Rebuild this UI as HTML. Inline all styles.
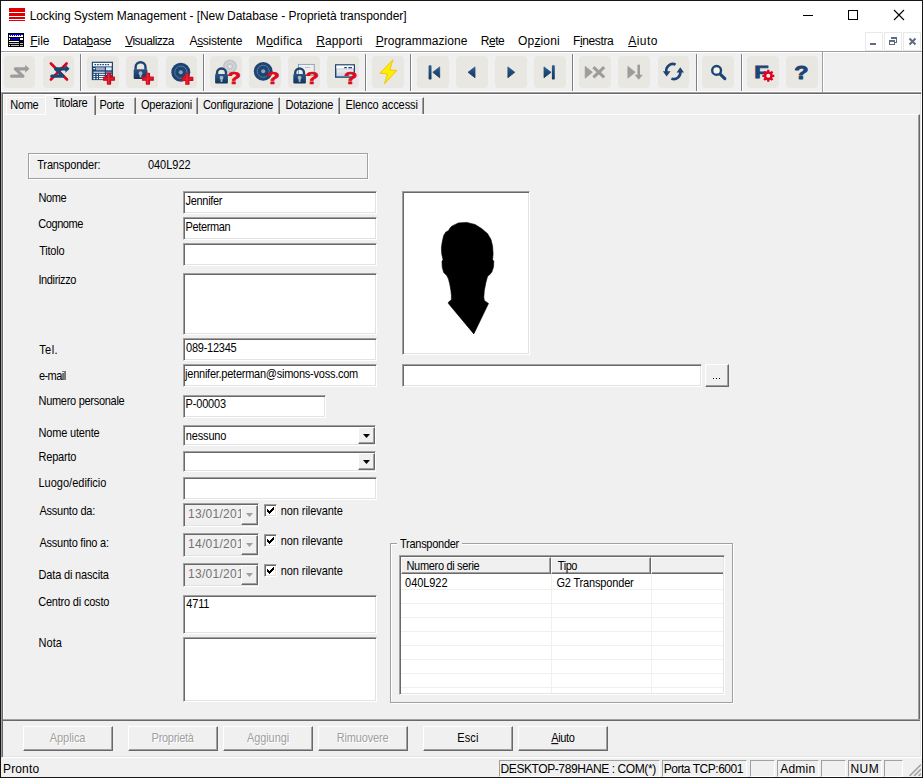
<!DOCTYPE html>
<html><head><meta charset="utf-8"><title>Locking System Management</title>
<style>
*{box-sizing:border-box;margin:0;padding:0}
html,body{width:923px;height:778px;overflow:hidden;background:#f0f0f0}
body{position:relative;font-family:"Liberation Sans",sans-serif;font-size:11px;color:#000}
div,span,svg{position:absolute}
.tx{white-space:nowrap;display:block}
.tx u{text-decoration:underline;text-underline-offset:1px;text-decoration-thickness:1px}
.sunk{border:1px solid;border-color:#a0a0a0 #fff #fff #a0a0a0;box-shadow:inset 1px 1px 0 #696969,inset -1px -1px 0 #e3e3e3;background:#fff}
.raised{border:1px solid;border-color:#fff #696969 #696969 #fff;box-shadow:inset -1px -1px 0 #a0a0a0;background:#f0f0f0}
.tbtn{top:56px;width:31px;height:32px;background:#e9e7e1;border-radius:4px}
.tsep{top:54px;width:1px;height:37px;background:#808080;box-shadow:1px 0 0 #fff}
.pane{border:1px solid;border-color:#a0a0a0 #fff #fff #a0a0a0;top:760px;height:17px;background:#f0f0f0}
.utab{top:97px;height:17px;border-top:1px solid #fff;border-right:1px solid #696969;box-shadow:inset -1px 0 0 #a0a0a0}
</style></head><body>
<!-- window frame -->
<div style="left:0;top:0;width:923px;height:778px;border:1px solid #161616"></div>
<!-- title bar -->
<div id="title" style="left:1px;top:1px;width:921px;height:29px;background:#fff"></div>
<!-- menu bar -->
<div id="menu" style="left:1px;top:30px;width:921px;height:21px;background:#fff"></div>
<!-- toolbar -->
<div id="tb" style="left:1px;top:51px;width:921px;height:41px;background:#f0f0f0;border-top:1px solid #a0a0a0;box-shadow:inset 1px 1px 0 #fff,inset 0 -1px 0 #fff"></div>
<!-- title icon -->
<div style="left:9px;top:8px;width:16px;height:4px;background:#de0000"></div>
<div style="left:9px;top:13px;width:16px;height:3px;background:#de0000"></div>
<div style="left:9px;top:17px;width:16px;height:2px;background:#de0000"></div>
<div style="left:9px;top:20px;width:16px;height:1.3px;background:#de0000"></div>
<!-- window controls -->
<div style="left:803px;top:15px;width:10px;height:1px;background:#000"></div>
<div style="left:848px;top:10px;width:10px;height:10px;border:1px solid #000"></div>
<svg style="left:893px;top:9px" width="12" height="12" viewBox="0 0 12 12"><path d="M1 1L11 11M11 1L1 11" stroke="#000" stroke-width="1.1"/></svg>
<!-- menu doc icon -->
<svg style="left:8px;top:33px" width="16" height="14" viewBox="0 0 16 14" shape-rendering="crispEdges">
<rect x="0" y="0" width="16" height="14" fill="#000"/>
<rect x="1" y="1" width="14" height="2" fill="#0000d0"/>
<path d="M1 2h1v1h-1zM3 2h1v1h-1zM5 2h1v1h-1zM7 2h1v1h-1zM9 2h1v1h-1zM11 2h1v1h-1zM13 2h2v1h-2z" fill="#fff"/>
<rect x="1" y="3" width="14" height="1" fill="#fff"/>
<rect x="1" y="5" width="1" height="2" fill="#fff"/><rect x="3" y="5" width="8" height="2" fill="#0000c0"/><rect x="12" y="5" width="3" height="2" fill="#fff"/>
<rect x="1" y="8" width="10" height="1" fill="#fff"/><rect x="12" y="8" width="3" height="1" fill="#000080"/>
<rect x="1" y="10" width="10" height="1" fill="#c0c0c0"/><rect x="12" y="10" width="3" height="1" fill="#c0c0c0"/>
<rect x="1" y="12" width="1" height="1" fill="#fff"/><rect x="3" y="12" width="8" height="1" fill="#c0c0c0"/><rect x="12" y="12" width="3" height="1" fill="#c0c0c0"/>
</svg>
<!-- mdi child buttons -->
<div style="left:865px;top:32px;width:18px;height:19px;border:1px solid #e9e9e9;background:#fff"></div>
<div style="left:884px;top:32px;width:18px;height:19px;border:1px solid #e9e9e9;background:#fff"></div>
<div style="left:903px;top:32px;width:18px;height:19px;border:1px solid #e9e9e9;background:#fff"></div>
<div style="left:870px;top:43px;width:6px;height:2px;background:#5d6c7e"></div>
<svg style="left:888px;top:36px" width="10" height="10" viewBox="0 0 10 10" shape-rendering="crispEdges"><path d="M3.5 3V1.5h5V6H6.5" fill="none" stroke="#5d6c7e" stroke-width="1"/><rect x="3" y="1" width="6" height="1.6" fill="#5d6c7e"/><rect x="1.5" y="4.5" width="5" height="4" fill="none" stroke="#5d6c7e" stroke-width="1"/><rect x="1" y="4" width="6" height="1.6" fill="#5d6c7e"/></svg>
<svg style="left:908px;top:37px" width="9" height="9" viewBox="0 0 9 9"><path d="M1.5 1.5L7.5 7.5M7.5 1.5L1.5 7.5" stroke="#5d6c7e" stroke-width="2"/></svg>
<svg width="0" height="0" style="left:0;top:0"><defs><linearGradient id="lg" x1="0" y1="0" x2="0" y2="1"><stop offset="0" stop-color="#2a5585"/><stop offset="1" stop-color="#123456"/></linearGradient><linearGradient id="ng" x1="0" y1="0" x2="0" y2="1"><stop offset="0" stop-color="#2c5f93"/><stop offset="1" stop-color="#13365c"/></linearGradient><linearGradient id="wg" x1="0" y1="0" x2="0" y2="1"><stop offset="0" stop-color="#ffffff"/><stop offset="1" stop-color="#c3d0e2"/></linearGradient></defs></svg>
<div class="tbtn" style="left:4.4px;width:30.5px"></div>
<svg style="left:4.4px;top:56px;overflow:visible" width="32" height="32" viewBox="0 0 32 32"><path d="M7.6 20.2H18.9L11.3 12.8H22" fill="none" stroke="#9c9c9c" stroke-width="3.2" stroke-linecap="round" stroke-linejoin="round"/><path d="M21.2 8.8L25.4 12.8L21.2 16.8z" fill="#9c9c9c"/></svg>
<div class="tbtn" style="left:42.7px;width:31.1px"></div>
<svg style="left:42.7px;top:56px;overflow:visible" width="32" height="32" viewBox="0 0 32 32"><path d="M7.9 7.5L24 23.5M7.9 23.5L23.6 7.5" stroke="#e2001a" stroke-width="2.6" stroke-linecap="round"/><path d="M8.799999999999999 20.2H20.099999999999998L12.5 12.8H23.2" fill="none" stroke="#1d4573" stroke-width="3.2" stroke-linecap="round" stroke-linejoin="round"/><path d="M22.4 8.8L26.599999999999998 12.8L22.4 16.8z" fill="#1d4573"/></svg>
<div class="tbtn" style="left:87.1px;width:31.5px"></div>
<svg style="left:87.1px;top:56px;overflow:visible" width="32" height="32" viewBox="0 0 32 32"><rect x="4.9" y="5.8" width="21" height="18.2" fill="#fff"/><rect x="5.4" y="6.3" width="20" height="17.2" fill="none" stroke="#1d4573" stroke-width="1.2"/><path d="M7.5 8.6h15.5" stroke="#1d4573" stroke-width="1.1" stroke-dasharray="1.6 1"/><rect x="5.4" y="10.4" width="20" height="13" fill="#1d4573"/><rect x="9" y="11.3" width="8.8" height="3" fill="#a3abc4"/><rect x="19" y="11.3" width="5.6" height="3" fill="#e8ecf2"/><rect x="6.4" y="12" width="1.8" height="1.2" fill="#fff"/><rect x="6.4" y="15.7" width="11.4" height="1" fill="#fff"/><rect x="19" y="15.7" width="5.6" height="1" fill="#8fa0bd"/><rect x="6.4" y="17.8" width="1.8" height="1.1" fill="#fff"/><rect x="9.6" y="17.8" width="1.4" height="1.1" fill="#fff"/><rect x="12" y="17.8" width="5.8" height="1.1" fill="#fff"/><rect x="19" y="17.8" width="5.6" height="1.1" fill="#fff"/><rect x="6.4" y="19.9" width="1.8" height="1.1" fill="#fff"/><rect x="9.6" y="19.9" width="1.4" height="1.1" fill="#fff"/><rect x="12" y="19.9" width="5.8" height="1.1" fill="#fff"/><rect x="6.4" y="21.8" width="1.8" height="1.4" fill="#fff"/><rect x="9.6" y="21.8" width="1.4" height="1.4" fill="#fff"/><rect x="12" y="21.8" width="5.8" height="1.4" fill="#fff"/><path d="M20.5 17.4h3.0v3.8h3.8v3.0h-3.8v3.8h-3.0v-3.8h-3.8v-3.0h3.8z" fill="#e01828" stroke="#cc0c1e" stroke-width="1.3" stroke-linejoin="round"/><path d="M21.4 17.7v10.0" stroke="#ee4450" stroke-width="0.9" opacity="0.6"/></svg>
<div class="tbtn" style="left:126.4px;width:31.5px"></div>
<svg style="left:126.4px;top:56px;overflow:visible" width="32" height="32" viewBox="0 0 32 32"><path d="M9.6 13.7V11.149999999999999a4.949999999999999 4.949999999999999 0 0 1 9.899999999999999 0V13.7" fill="none" stroke="#1d4573" stroke-width="2.4"/><rect x="7.7" y="13.2" width="13.7" height="9.900000000000002" rx="1" fill="url(#lg)"/><circle cx="14.549999999999999" cy="17.15" r="1.9" fill="#a9b6cb"/><rect x="13.649999999999999" y="17.15" width="1.8" height="4.2" fill="#a9b6cb"/><path d="M20.4 17.4h3.0v3.8h3.8v3.0h-3.8v3.8h-3.0v-3.8h-3.8v-3.0h3.8z" fill="#e01828" stroke="#cc0c1e" stroke-width="1.3" stroke-linejoin="round"/><path d="M21.299999999999997 17.7v10.0" stroke="#ee4450" stroke-width="0.9" opacity="0.6"/></svg>
<div class="tbtn" style="left:165.7px;width:31.5px"></div>
<svg style="left:165.7px;top:56px;overflow:visible" width="32" height="32" viewBox="0 0 32 32"><circle cx="14.8" cy="16.2" r="9.5" fill="#1d4573"/><circle cx="14.8" cy="16.2" r="6.08" fill="none" stroke="#5f7fa8" stroke-width="0.9"/><circle cx="14.8" cy="16.2" r="2" fill="#93a4c0"/><path d="M19.9 17.599999999999998h3.0v3.8h3.8v3.0h-3.8v3.8h-3.0v-3.8h-3.8v-3.0h3.8z" fill="#e01828" stroke="#cc0c1e" stroke-width="1.3" stroke-linejoin="round"/><path d="M20.799999999999997 17.9v10.0" stroke="#ee4450" stroke-width="0.9" opacity="0.6"/></svg>
<div class="tbtn" style="left:210px;width:31.5px"></div>
<svg style="left:210px;top:56px;overflow:visible" width="32" height="32" viewBox="0 0 32 32"><circle cx="20" cy="10.4" r="7" fill="#c4c8cc"/><circle cx="20" cy="10.4" r="4.34" fill="none" stroke="#dcdfe2" stroke-width="1"/><circle cx="20" cy="10.4" r="1.6" fill="#e4e6e8"/><path d="M7.0 18.5V17.0a4.5 4.5 0 0 1 9.0 0V18.5" fill="none" stroke="#1d4573" stroke-width="2.4"/><rect x="5.1" y="18" width="12.799999999999999" height="9.5" rx="1" fill="url(#lg)"/><circle cx="11.5" cy="21.75" r="1.9" fill="#a9b6cb"/><rect x="10.6" y="21.75" width="1.8" height="4.2" fill="#a9b6cb"/><text x="0" y="0" transform="translate(17.62 27.8) scale(1.28 1)" font-family="Liberation Sans, sans-serif" font-weight="bold" font-size="17.2" fill="#dd0a1a" stroke="#dd0a1a" stroke-width="0.7" stroke-linejoin="round">?</text></svg>
<div class="tbtn" style="left:249.2px;width:31.5px"></div>
<svg style="left:249.2px;top:56px;overflow:visible" width="32" height="32" viewBox="0 0 32 32"><circle cx="14.2" cy="15.3" r="9.4" fill="#1d4573"/><circle cx="14.2" cy="15.3" r="6.016" fill="none" stroke="#5f7fa8" stroke-width="0.9"/><circle cx="14.2" cy="15.3" r="2" fill="#93a4c0"/><text x="0" y="0" transform="translate(17.32 27.8) scale(1.28 1)" font-family="Liberation Sans, sans-serif" font-weight="bold" font-size="17.2" fill="#dd0a1a" stroke="#dd0a1a" stroke-width="0.7" stroke-linejoin="round">?</text></svg>
<div class="tbtn" style="left:288px;width:31.6px"></div>
<svg style="left:288px;top:56px;overflow:visible" width="32" height="32" viewBox="0 0 32 32"><rect x="10.6" y="8.3" width="15.6" height="11" fill="#eeeeea" stroke="#6a86b4" stroke-width="0.7"/><path d="M17 11.5h5" stroke="#9aa" stroke-width="0.6"/><path d="M7.200000000000001 18.5V16.9a4.399999999999999 4.399999999999999 0 0 1 8.799999999999997 0V18.5" fill="none" stroke="#1d4573" stroke-width="2.4"/><rect x="5.3" y="18" width="12.599999999999998" height="9.5" rx="1" fill="url(#lg)"/><circle cx="11.6" cy="21.75" r="1.9" fill="#a9b6cb"/><rect x="10.7" y="21.75" width="1.8" height="4.2" fill="#a9b6cb"/><text x="0" y="0" transform="translate(17.62 27.8) scale(1.28 1)" font-family="Liberation Sans, sans-serif" font-weight="bold" font-size="17.2" fill="#dd0a1a" stroke="#dd0a1a" stroke-width="0.7" stroke-linejoin="round">?</text></svg>
<div class="tbtn" style="left:327.2px;width:31.6px"></div>
<svg style="left:327.2px;top:56px;overflow:visible" width="32" height="32" viewBox="0 0 32 32"><rect x="8.7" y="8.9" width="18.6" height="12.2" fill="url(#wg)" stroke="#1d4573" stroke-width="1.4"/><rect x="9.4" y="9.6" width="17.2" height="2.6" fill="#fff"/><path d="M9.4 13h17.2" stroke="#b9c6d8" stroke-width="0.8"/><path d="M17.2 11.6h2.6M21.4 11.6h3.6" stroke="#1d4573" stroke-width="1.3"/><text x="0" y="0" transform="translate(17.12 27.8) scale(1.28 1)" font-family="Liberation Sans, sans-serif" font-weight="bold" font-size="17.2" fill="#dd0a1a" stroke="#dd0a1a" stroke-width="0.7" stroke-linejoin="round">?</text></svg>
<div class="tbtn" style="left:372px;width:31.6px"></div>
<svg style="left:372px;top:56px;overflow:visible" width="32" height="32" viewBox="0 0 32 32"><path d="M20.9 3.8L8 17.1L15.5 18L12.4 27.8L24.9 14.4L17.7 14z" fill="#ffee00" stroke="#f0c000" stroke-width="0.9" stroke-linejoin="round"/></svg>
<div class="tbtn" style="left:417.3px;width:31.4px"></div>
<svg style="left:417.3px;top:56px;overflow:visible" width="32" height="32" viewBox="0 0 32 32"><rect x="11.6" y="9.2" width="2.9" height="14.3" rx="0.8" fill="url(#ng)"/><path d="M22.7 10.9V21.7L15.8 16.3z" fill="url(#ng)" stroke="url(#ng)" stroke-width="0.8" stroke-linejoin="round"/></svg>
<div class="tbtn" style="left:456px;width:31.6px"></div>
<svg style="left:456px;top:56px;overflow:visible" width="32" height="32" viewBox="0 0 32 32"><path d="M19 10.9V21.7L12 16.3z" fill="url(#ng)" stroke="url(#ng)" stroke-width="0.8" stroke-linejoin="round"/></svg>
<div class="tbtn" style="left:495.1px;width:31.5px"></div>
<svg style="left:495.1px;top:56px;overflow:visible" width="32" height="32" viewBox="0 0 32 32"><path d="M12.9 10.9V21.7L19.8 16.3z" fill="url(#ng)" stroke="url(#ng)" stroke-width="0.8" stroke-linejoin="round"/></svg>
<div class="tbtn" style="left:534.3px;width:31.3px"></div>
<svg style="left:534.3px;top:56px;overflow:visible" width="32" height="32" viewBox="0 0 32 32"><path d="M10 10.9V21.7L17.1 16.3z" fill="url(#ng)" stroke="url(#ng)" stroke-width="0.8" stroke-linejoin="round"/><rect x="17.9" y="9.2" width="2.9" height="14.3" rx="0.8" fill="url(#ng)"/></svg>
<div class="tbtn" style="left:579.4px;width:31.3px"></div>
<svg style="left:579.4px;top:56px;overflow:visible" width="32" height="32" viewBox="0 0 32 32"><path d="M6.2 10.4V22.1L13.4 16.25z" fill="#9c9c9c" stroke="#9c9c9c" stroke-width="0.8" stroke-linejoin="round"/><path d="M14.4 11.2L25.2 21.4M25.2 11.2L14.4 21.4" stroke="#9c9c9c" stroke-width="3.1"/></svg>
<div class="tbtn" style="left:618.2px;width:31.4px"></div>
<svg style="left:618.2px;top:56px;overflow:visible" width="32" height="32" viewBox="0 0 32 32"><path d="M9.9 10.4V22.1L17.2 16.25z" fill="#9c9c9c" stroke="#9c9c9c" stroke-width="0.8" stroke-linejoin="round"/><path d="M20.7 8.7V21" stroke="#9c9c9c" stroke-width="2.6"/><path d="M16.6 18.8H24.8L20.7 23.8z" fill="#9c9c9c"/></svg>
<div class="tbtn" style="left:657.5px;width:31.3px"></div>
<svg style="left:657.5px;top:56px;overflow:visible" width="32" height="32" viewBox="0 0 32 32"><path d="M17.6 8.6A6.6 6.6 0 0 0 8.6 16.6" fill="none" stroke="#1d4573" stroke-width="2.6"/><path d="M4.9 15.2H12.6L8.6 20.4z" fill="#1d4573"/><path d="M13.4 22.6A6.6 6.6 0 0 0 22.2 15" fill="none" stroke="#1d4573" stroke-width="2.6"/><path d="M18.6 16.4H26L22.3 11.2z" fill="#1d4573"/></svg>
<div class="tbtn" style="left:701.9px;width:31.8px"></div>
<svg style="left:701.9px;top:56px;overflow:visible" width="32" height="32" viewBox="0 0 32 32"><circle cx="14.6" cy="14.4" r="4.4" fill="#f4f4f0" stroke="#1d4573" stroke-width="2.4"/><path d="M18.2 18.2L22.8 22.6" stroke="#1d4573" stroke-width="3.2" stroke-linecap="round"/></svg>
<div class="tbtn" style="left:747.4px;width:31.3px"></div>
<svg style="left:747.4px;top:56px;overflow:visible" width="32" height="32" viewBox="0 0 32 32"><text transform="translate(7.2 21.5) scale(1.38 1)" font-family="Liberation Sans, sans-serif" font-weight="bold" font-size="17" fill="#1d4573" stroke="#1d4573" stroke-width="0.8">F</text><path d="M27.29 18.65L27.29 20.95L25.65 20.96L25.19 22.06L26.35 23.22L24.72 24.85L23.56 23.69L22.46 24.15L22.45 25.79L20.15 25.79L20.14 24.15L19.04 23.69L17.88 24.85L16.25 23.22L17.41 22.06L16.95 20.96L15.31 20.95L15.31 18.65L16.95 18.64L17.41 17.54L16.25 16.38L17.88 14.75L19.04 15.91L20.14 15.45L20.15 13.81L22.45 13.81L22.46 15.45L23.56 15.91L24.72 14.75L26.35 16.38L25.19 17.54L25.65 18.64z" fill="#e0001f"/><circle cx="21.3" cy="19.8" r="2" fill="#f4efe9"/></svg>
<div class="tbtn" style="left:786.4px;width:31.6px"></div>
<svg style="left:786.4px;top:56px;overflow:visible" width="32" height="32" viewBox="0 0 32 32"><text x="0" y="0" transform="translate(8.37 23.2) scale(1.24 1)" font-family="Liberation Sans, sans-serif" font-weight="bold" font-size="18.8" fill="#1d4573" stroke="#1d4573" stroke-width="0.9" stroke-linejoin="round">?</text></svg>
<div class="tsep" style="left:80px"></div>
<div class="tsep" style="left:203px"></div>
<div class="tsep" style="left:365px"></div>
<div class="tsep" style="left:410px"></div>
<div class="tsep" style="left:572px"></div>
<div class="tsep" style="left:696px"></div>
<div class="tsep" style="left:741px"></div>
<div class="tsep" style="left:822px;top:52px;height:40px;background:#a0a0a0"></div>
<!-- mdi client edge -->
<div style="left:1px;top:92px;width:921px;height:666px;border:1px solid;border-color:#a0a0a0 #fff #fff #a0a0a0;box-shadow:inset 1px 1px 0 #696969,inset -1px -1px 0 #e3e3e3;background:#f0f0f0"></div>
<!-- dialog highlight -->
<div style="left:3px;top:94px;width:917px;height:625px;border-left:1px solid #fff;border-top:1px solid #fff"></div>
<!-- tab pane -->
<div style="left:3px;top:114px;width:917px;height:607px;border:1px solid;border-color:#fff #696969 #696969 #fff;box-shadow:inset -1px -1px 0 #a0a0a0"></div>
<div style="left:3px;top:719px;width:917px;height:2px;background:#696969;border-top:1px solid #a0a0a0"></div>
<!-- unselected tabs: Nome -->
<div style="left:6px;top:97px;width:40px;height:17px;border-top:1px solid #fff;border-left:1px solid #fff"></div>
<!-- selected tab Titolare -->
<div style="left:45px;top:95px;width:51px;height:20px;background:#f0f0f0;border:1px solid;border-color:#fff #696969 #f0f0f0 #fff;border-bottom:0;box-shadow:inset -1px 0 0 #a0a0a0"></div><div style="left:46px;top:114px;width:48px;height:2px;background:#f0f0f0"></div>
<!-- other tabs -->
<div class="utab" style="left:96px;width:40px"></div>
<div class="utab" style="left:136px;width:62px"></div>
<div class="utab" style="left:198px;width:82px"></div>
<div class="utab" style="left:280px;width:60px"></div>
<div class="utab" style="left:340px;width:84px"></div>

<div style="left:28px;top:153px;width:340px;height:26px;border:1px solid #a0a0a0;box-shadow:1px 1px 0 #fff,inset 1px 1px 0 #fff"></div>
<div class="sunk" style="left:183px;top:191px;width:194px;height:23px"></div>
<div class="sunk" style="left:183px;top:217px;width:194px;height:23px"></div>
<div class="sunk" style="left:183px;top:243px;width:194px;height:23px"></div>
<div class="sunk" style="left:183px;top:273px;width:194px;height:62px"></div>
<div class="sunk" style="left:183px;top:338px;width:194px;height:23px"></div>
<div class="sunk" style="left:183px;top:364px;width:194px;height:23px"></div>
<div class="sunk" style="left:183px;top:395px;width:143px;height:23px"></div>
<div class="sunk" style="left:183px;top:425px;width:193px;height:21px"></div>
<div class="raised" style="left:358px;top:427px;width:17px;height:17px"></div>
<svg style="left:363px;top:434px" width="7" height="4" viewBox="0 0 7 4"><path d="M0 0h7L3.5 4z" fill="#000"/></svg>
<div class="sunk" style="left:183px;top:451px;width:193px;height:21px"></div>
<div class="raised" style="left:358px;top:453px;width:17px;height:17px"></div>
<svg style="left:363px;top:460px" width="7" height="4" viewBox="0 0 7 4"><path d="M0 0h7L3.5 4z" fill="#000"/></svg>
<div class="sunk" style="left:183px;top:477px;width:194px;height:23px"></div>
<div class="sunk" style="left:183px;top:503px;width:76px;height:24px;background:#f0f0f0"></div>
<div class="raised" style="left:241px;top:505px;width:17px;height:20px"></div>
<svg style="left:246px;top:513px" width="7" height="4" viewBox="0 0 7 4"><path d="M0 0h7L3.5 4z" fill="#a0a0a0"/></svg>
<div style="left:185px;top:506px;width:56px;height:18px;overflow:hidden"><span class="tx" style="left:3px;top:0px;font-size:12px;line-height:16px;color:#737373;letter-spacing:0.28px">13/01/2016</span></div>
<div class="sunk" style="left:264px;top:504px;width:13px;height:13px"></div>
<svg style="left:267px;top:507px" width="7" height="7" viewBox="0 0 7 7"><path d="M0 2v3l2 2 5-5v-3l-5 5z" fill="#000" shape-rendering="crispEdges"/></svg>
<div class="sunk" style="left:183px;top:533px;width:76px;height:24px;background:#f0f0f0"></div>
<div class="raised" style="left:241px;top:535px;width:17px;height:20px"></div>
<svg style="left:246px;top:543px" width="7" height="4" viewBox="0 0 7 4"><path d="M0 0h7L3.5 4z" fill="#a0a0a0"/></svg>
<div style="left:185px;top:536px;width:56px;height:18px;overflow:hidden"><span class="tx" style="left:3px;top:0px;font-size:12px;line-height:16px;color:#737373;letter-spacing:0.28px">14/01/2016</span></div>
<div class="sunk" style="left:264px;top:534px;width:13px;height:13px"></div>
<svg style="left:267px;top:537px" width="7" height="7" viewBox="0 0 7 7"><path d="M0 2v3l2 2 5-5v-3l-5 5z" fill="#000" shape-rendering="crispEdges"/></svg>
<div class="sunk" style="left:183px;top:563px;width:76px;height:24px;background:#f0f0f0"></div>
<div class="raised" style="left:241px;top:565px;width:17px;height:20px"></div>
<svg style="left:246px;top:573px" width="7" height="4" viewBox="0 0 7 4"><path d="M0 0h7L3.5 4z" fill="#a0a0a0"/></svg>
<div style="left:185px;top:566px;width:56px;height:18px;overflow:hidden"><span class="tx" style="left:3px;top:0px;font-size:12px;line-height:16px;color:#737373;letter-spacing:0.28px">13/01/2016</span></div>
<div class="sunk" style="left:264px;top:564px;width:13px;height:13px"></div>
<svg style="left:267px;top:567px" width="7" height="7" viewBox="0 0 7 7"><path d="M0 2v3l2 2 5-5v-3l-5 5z" fill="#000" shape-rendering="crispEdges"/></svg>
<div class="sunk" style="left:183px;top:595px;width:194px;height:39px"></div>
<div class="sunk" style="left:183px;top:637px;width:194px;height:65px"></div>
<div class="sunk" style="left:402px;top:191px;width:128px;height:164px"></div>
<svg style="left:402px;top:191px" width="127" height="163" viewBox="0 0 127 163"><path d="M49.7 35.2 L56.4 31.9 L64.8 31.4 L73.1 33.5 L79.8 37.7 L85.6 42.7 L89.0 48.6 L90.6 55.2 L91.1 62.8 L90.6 68.6 L91.8 70.3 L91.5 76.1 L89.8 81.1 L87.3 84.1 L85.6 85.3 L84.0 91.1 L82.3 99.5 L81.8 106.2 L82.3 109.5 L86.5 112.5 L71.8 142.9 L46.4 112.5 L46.4 111.2 L49.4 108.7 L49.4 104.5 L48.9 99.5 L47.7 92.8 L46.4 87.8 L44.7 84.5 L41.7 81.5 L40.2 76.1 L40.0 70.3 L41.0 68.6 L39.7 62.8 L39.4 56.9 L40.2 51.1 L41.7 44.4 L43.9 41.0 L46.4 39.7 L48.1 36.9Z" fill="#000" stroke="#000" stroke-width="0.6" stroke-linejoin="round"/></svg>
<div class="sunk" style="left:402px;top:364px;width:300px;height:23px"></div>
<div class="raised" style="left:705px;top:364px;width:24px;height:23px"></div>
<div style="left:713px;top:378px;width:1px;height:1px;background:#000;box-shadow:3px 0 0 #000,6px 0 0 #000"></div>
<div style="left:390px;top:543px;width:343px;height:160px;border:1px solid #a0a0a0;box-shadow:1px 1px 0 #fff,inset 1px 1px 0 #fff"></div>
<div style="left:397px;top:538px;width:65px;height:13px;background:#f0f0f0"></div>
<div class="sunk" style="left:399px;top:555px;width:326px;height:140px"></div>
<div class="raised" style="left:401px;top:557px;width:150px;height:17px"></div>
<div class="raised" style="left:551px;top:557px;width:100px;height:17px"></div>
<div class="raised" style="left:651px;top:557px;width:72px;height:17px;border-right:0;box-shadow:inset 0 -1px 0 #a0a0a0"></div>
<div style="left:401px;top:589px;width:322px;height:1px;background:#f0f0f0"></div>
<div style="left:401px;top:603px;width:322px;height:1px;background:#f0f0f0"></div>
<div style="left:401px;top:617px;width:322px;height:1px;background:#f0f0f0"></div>
<div style="left:401px;top:631px;width:322px;height:1px;background:#f0f0f0"></div>
<div style="left:401px;top:645px;width:322px;height:1px;background:#f0f0f0"></div>
<div style="left:401px;top:659px;width:322px;height:1px;background:#f0f0f0"></div>
<div style="left:401px;top:673px;width:322px;height:1px;background:#f0f0f0"></div>
<div style="left:401px;top:687px;width:322px;height:1px;background:#f0f0f0"></div>
<div style="left:551px;top:574px;width:1px;height:119px;background:#f0f0f0"></div>
<div style="left:651px;top:574px;width:1px;height:119px;background:#f0f0f0"></div>
<div class="raised" style="left:23px;top:726px;width:90px;height:25px"></div>
<div class="raised" style="left:128px;top:726px;width:90px;height:25px"></div>
<div class="raised" style="left:223px;top:726px;width:90px;height:25px"></div>
<div class="raised" style="left:318px;top:726px;width:90px;height:25px"></div>
<div class="raised" style="left:423px;top:726px;width:90px;height:25px"></div>
<div class="raised" style="left:518px;top:726px;width:90px;height:25px"></div>
<div style="left:1px;top:758px;width:921px;height:19px;background:#f0f0f0"></div>
<div class="pane" style="left:499px;width:161px"></div>
<div class="pane" style="left:662px;width:85px"></div>
<div class="pane" style="left:750px;width:25px"></div>
<div class="pane" style="left:777px;width:42px"></div>
<div class="pane" style="left:821px;width:25px"></div>
<div class="pane" style="left:848px;width:34px"></div>
<div class="pane" style="left:884px;width:19px"></div>
<svg style="left:905px;top:760px" width="16" height="16" viewBox="0 0 16 16"><g stroke="#a6a6a6" stroke-width="1.7"><path d="M16 4.5L4.5 16M16 9L9 16M16 13.5L13.5 16"/></g></svg>
<span class="tx" style="left:29.65px;top:8px;font-size:12px;line-height:16px;letter-spacing:-0.060px;color:#000">Locking System Management - [New Database - Proprietà transponder]</span>
<span class="tx" style="left:30.25px;top:33px;font-size:12px;line-height:16px;letter-spacing:-0.054px;color:#000"><u>F</u>ile</span>
<span class="tx" style="left:62.65px;top:33px;font-size:12px;line-height:16px;letter-spacing:-0.356px;color:#000">Data<u>b</u>ase</span>
<span class="tx" style="left:125.15px;top:33px;font-size:12px;line-height:16px;letter-spacing:-0.498px;color:#000"><u>V</u>isualizza</span>
<span class="tx" style="left:189.40px;top:33px;font-size:12px;line-height:16px;letter-spacing:-0.271px;color:#000">A<u>s</u>sistente</span>
<span class="tx" style="left:255.95px;top:33px;font-size:12px;line-height:16px;letter-spacing:0.234px;color:#000">M<u>o</u>difica</span>
<span class="tx" style="left:316.25px;top:33px;font-size:12px;line-height:16px;letter-spacing:0.108px;color:#000"><u>R</u>apporti</span>
<span class="tx" style="left:375.65px;top:33px;font-size:12px;line-height:16px;letter-spacing:0.023px;color:#000"><u>P</u>rogrammazione</span>
<span class="tx" style="left:480.75px;top:33px;font-size:12px;line-height:16px;letter-spacing:-0.491px;color:#000">R<u>e</u>te</span>
<span class="tx" style="left:518.05px;top:33px;font-size:12px;line-height:16px;letter-spacing:0.155px;color:#000">Op<u>z</u>ioni</span>
<span class="tx" style="left:572.95px;top:33px;font-size:12px;line-height:16px;letter-spacing:-0.361px;color:#000">F<u>i</u>nestra</span>
<span class="tx" style="left:628.20px;top:33px;font-size:12px;line-height:16px;letter-spacing:0.456px;color:#000"><u>A</u>iuto</span>
<span class="tx" style="left:10.30px;top:98.49px;font-size:11px;line-height:15px;letter-spacing:-0.358px;color:#000;transform:scaleY(1.1);transform-origin:0 11.31px">Nome</span>
<span class="tx" style="left:53.40px;top:96.49px;font-size:11px;line-height:15px;letter-spacing:-0.286px;color:#000;transform:scaleY(1.1);transform-origin:0 11.31px">Titolare</span>
<span class="tx" style="left:99.50px;top:98.49px;font-size:11px;line-height:15px;letter-spacing:-0.381px;color:#000;transform:scaleY(1.1);transform-origin:0 11.31px">Porte</span>
<span class="tx" style="left:141.00px;top:98.49px;font-size:11px;line-height:15px;letter-spacing:-0.233px;color:#000;transform:scaleY(1.1);transform-origin:0 11.31px">Operazioni</span>
<span class="tx" style="left:202.95px;top:98.49px;font-size:11px;line-height:15px;letter-spacing:-0.267px;color:#000;transform:scaleY(1.1);transform-origin:0 11.31px">Configurazione</span>
<span class="tx" style="left:285.60px;top:98.49px;font-size:11px;line-height:15px;letter-spacing:-0.233px;color:#000;transform:scaleY(1.1);transform-origin:0 11.31px">Dotazione</span>
<span class="tx" style="left:345.40px;top:98.49px;font-size:11px;line-height:15px;letter-spacing:-0.060px;color:#000;transform:scaleY(1.1);transform-origin:0 11.31px">Elenco accessi</span>
<span class="tx" style="left:37.20px;top:157.69px;font-size:11px;line-height:15px;letter-spacing:-0.142px;color:#000;transform:scaleY(1.1);transform-origin:0 11.31px">Transponder:</span>
<span class="tx" style="left:147.90px;top:157.69px;font-size:11px;line-height:15px;letter-spacing:-0.001px;color:#000;transform:scaleY(1.1);transform-origin:0 11.31px">040L922</span>
<span class="tx" style="left:38.50px;top:190.99px;font-size:11px;line-height:15px;letter-spacing:-0.425px;color:#000;transform:scaleY(1.1);transform-origin:0 11.31px">Nome</span>
<span class="tx" style="left:38.15px;top:216.99px;font-size:11px;line-height:15px;letter-spacing:-0.396px;color:#000;transform:scaleY(1.1);transform-origin:0 11.31px">Cognome</span>
<span class="tx" style="left:39.20px;top:243.59px;font-size:11px;line-height:15px;letter-spacing:-0.235px;color:#000;transform:scaleY(1.1);transform-origin:0 11.31px">Titolo</span>
<span class="tx" style="left:38.40px;top:272.99px;font-size:11px;line-height:15px;letter-spacing:-0.368px;color:#000;transform:scaleY(1.1);transform-origin:0 11.31px">Indirizzo</span>
<span class="tx" style="left:39.20px;top:342.69px;font-size:11px;line-height:15px;letter-spacing:0.413px;color:#000;transform:scaleY(1.1);transform-origin:0 11.31px">Tel.</span>
<span class="tx" style="left:38.95px;top:368.79px;font-size:11px;line-height:15px;letter-spacing:-0.561px;color:#000;transform:scaleY(1.1);transform-origin:0 11.31px">e-mail</span>
<span class="tx" style="left:38.50px;top:394.49px;font-size:11px;line-height:15px;letter-spacing:-0.288px;color:#000;transform:scaleY(1.1);transform-origin:0 11.31px">Numero personale</span>
<span class="tx" style="left:38.50px;top:425.69px;font-size:11px;line-height:15px;letter-spacing:-0.181px;color:#000;transform:scaleY(1.1);transform-origin:0 11.31px">Nome utente</span>
<span class="tx" style="left:38.50px;top:450.29px;font-size:11px;line-height:15px;letter-spacing:-0.203px;color:#000;transform:scaleY(1.1);transform-origin:0 11.31px">Reparto</span>
<span class="tx" style="left:38.50px;top:476.39px;font-size:11px;line-height:15px;letter-spacing:0.002px;color:#000;transform:scaleY(1.1);transform-origin:0 11.31px">Luogo/edificio</span>
<span class="tx" style="left:39.40px;top:503.89px;font-size:11px;line-height:15px;letter-spacing:-0.224px;color:#000;transform:scaleY(1.1);transform-origin:0 11.31px">Assunto da:</span>
<span class="tx" style="left:39.40px;top:536.19px;font-size:11px;line-height:15px;letter-spacing:-0.229px;color:#000;transform:scaleY(1.1);transform-origin:0 11.31px">Assunto fino a:</span>
<span class="tx" style="left:38.50px;top:567.89px;font-size:11px;line-height:15px;letter-spacing:-0.164px;color:#000;transform:scaleY(1.1);transform-origin:0 11.31px">Data di nascita</span>
<span class="tx" style="left:38.15px;top:594.79px;font-size:11px;line-height:15px;letter-spacing:-0.194px;color:#000;transform:scaleY(1.1);transform-origin:0 11.31px">Centro di costo</span>
<span class="tx" style="left:38.50px;top:636.49px;font-size:11px;line-height:15px;letter-spacing:0.077px;color:#000;transform:scaleY(1.1);transform-origin:0 11.31px">Nota</span>
<span class="tx" style="left:185.55px;top:193.99px;font-size:11px;line-height:15px;letter-spacing:-0.317px;color:#000;transform:scaleY(1.1);transform-origin:0 11.31px">Jennifer</span>
<span class="tx" style="left:185.60px;top:219.99px;font-size:11px;line-height:15px;letter-spacing:-0.375px;color:#000;transform:scaleY(1.1);transform-origin:0 11.31px">Peterman</span>
<span class="tx" style="left:186.10px;top:340.99px;font-size:11px;line-height:15px;letter-spacing:-0.248px;color:#000;transform:scaleY(1.1);transform-origin:0 11.31px">089-12345</span>
<span class="tx" style="left:185.10px;top:366.99px;font-size:11px;line-height:15px;letter-spacing:-0.250px;color:#000;transform:scaleY(1.1);transform-origin:0 11.31px">jennifer.peterman@simons-voss.com</span>
<span class="tx" style="left:185.60px;top:397.49px;font-size:11px;line-height:15px;letter-spacing:-0.187px;color:#000;transform:scaleY(1.1);transform-origin:0 11.31px">P-00003</span>
<span class="tx" style="left:185.80px;top:428.59px;font-size:11px;line-height:15px;letter-spacing:-0.162px;color:#000;transform:scaleY(1.1);transform-origin:0 11.31px">nessuno</span>
<span class="tx" style="left:186.25px;top:597.29px;font-size:11px;line-height:15px;letter-spacing:-0.162px;color:#000;transform:scaleY(1.1);transform-origin:0 11.31px">4711</span>
<span class="tx" style="left:280.70px;top:504.29px;font-size:11px;line-height:15px;letter-spacing:-0.068px;color:#000;transform:scaleY(1.1);transform-origin:0 11.31px">non rilevante</span>
<span class="tx" style="left:280.70px;top:534.29px;font-size:11px;line-height:15px;letter-spacing:-0.068px;color:#000;transform:scaleY(1.1);transform-origin:0 11.31px">non rilevante</span>
<span class="tx" style="left:280.70px;top:564.29px;font-size:11px;line-height:15px;letter-spacing:-0.068px;color:#000;transform:scaleY(1.1);transform-origin:0 11.31px">non rilevante</span>
<span class="tx" style="left:400.00px;top:536.99px;font-size:11px;line-height:15px;letter-spacing:-0.270px;color:#000;transform:scaleY(1.1);transform-origin:0 11.31px">Transponder</span>
<span class="tx" style="left:406.50px;top:559.29px;font-size:11px;line-height:15px;letter-spacing:-0.319px;color:#000;transform:scaleY(1.1);transform-origin:0 11.31px">Numero di serie</span>
<span class="tx" style="left:557.80px;top:559.29px;font-size:11px;line-height:15px;letter-spacing:-0.458px;color:#000;transform:scaleY(1.1);transform-origin:0 11.31px">Tipo</span>
<span class="tx" style="left:405.10px;top:576.29px;font-size:11px;line-height:15px;letter-spacing:-0.068px;color:#000;transform:scaleY(1.1);transform-origin:0 11.31px">040L922</span>
<span class="tx" style="left:556.45px;top:576.29px;font-size:11px;line-height:15px;letter-spacing:-0.168px;color:#000;transform:scaleY(1.1);transform-origin:0 11.31px">G2 Transponder</span>
<span class="tx" style="left:49.80px;top:730.99px;font-size:11px;line-height:15px;letter-spacing:-0.068px;color:#a0a0a0;transform:scaleY(1.1);transform-origin:0 11.31px;text-shadow:1px 1px 0 #fff">Applica</span>
<span class="tx" style="left:151.60px;top:730.99px;font-size:11px;line-height:15px;letter-spacing:-0.296px;color:#a0a0a0;transform:scaleY(1.1);transform-origin:0 11.31px;text-shadow:1px 1px 0 #fff">Proprietà</span>
<span class="tx" style="left:246.90px;top:730.99px;font-size:11px;line-height:15px;letter-spacing:-0.074px;color:#a0a0a0;transform:scaleY(1.1);transform-origin:0 11.31px;text-shadow:1px 1px 0 #fff">Aggiungi</span>
<span class="tx" style="left:336.70px;top:730.99px;font-size:11px;line-height:15px;letter-spacing:-0.152px;color:#a0a0a0;transform:scaleY(1.1);transform-origin:0 11.31px;text-shadow:1px 1px 0 #fff">Rimuovere</span>
<span class="tx" style="left:457.20px;top:730.99px;font-size:11px;line-height:15px;letter-spacing:0.171px;color:#000;transform:scaleY(1.1);transform-origin:0 11.31px">Esci</span>
<span class="tx" style="left:551.30px;top:730.99px;font-size:11px;line-height:15px;letter-spacing:-0.364px;color:#000;transform:scaleY(1.1);transform-origin:0 11.31px"><u>A</u>iuto</span>
<span class="tx" style="left:3.05px;top:761px;font-size:12px;line-height:16px;letter-spacing:0.134px;color:#000">Pronto</span>
<span class="tx" style="left:500.55px;top:761px;font-size:12px;line-height:16px;letter-spacing:-0.413px;color:#000">DESKTOP-789HANE : COM(*)</span>
<span class="tx" style="left:663.65px;top:761px;font-size:12px;line-height:16px;letter-spacing:-0.463px;color:#000">Porta TCP:6001</span>
<span class="tx" style="left:780.20px;top:761px;font-size:12px;line-height:16px;letter-spacing:0.240px;color:#000">Admin</span>
<span class="tx" style="left:850.55px;top:761px;font-size:12px;line-height:16px;letter-spacing:0.384px;color:#000">NUM</span>
</body></html>
